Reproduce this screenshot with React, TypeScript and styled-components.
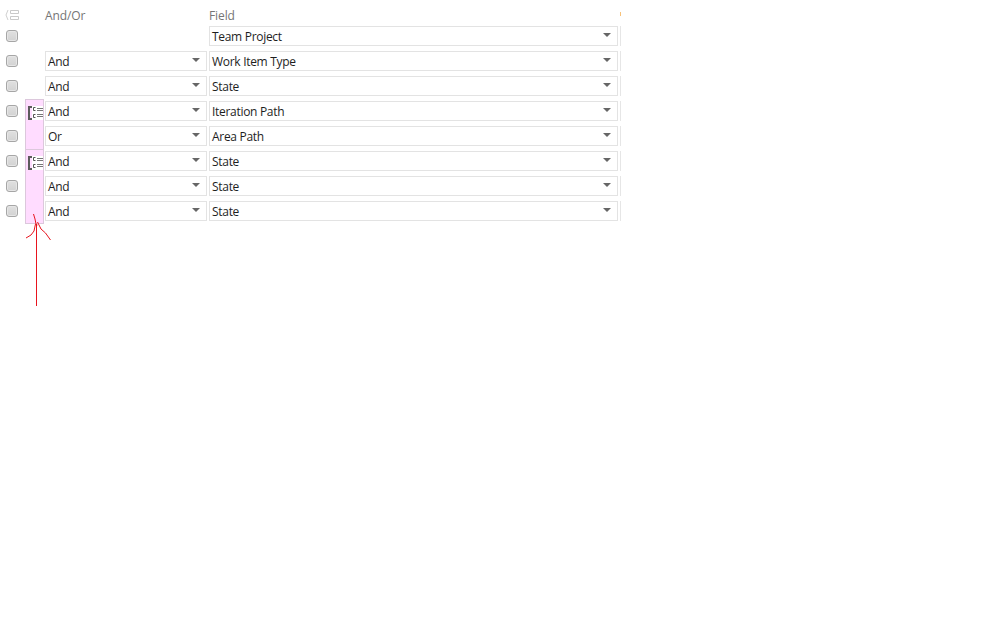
import React from 'react';
import styled, { createGlobalStyle } from 'styled-components';

const GlobalStyle = createGlobalStyle`
  html, body {
    margin: 0;
    background: #fff;
  }
  body {
    font-family: "Open Sans", "Noto Sans", "Liberation Sans", sans-serif;
    font-size: 12px;
  }
`;

const Page = styled.div`
  position: relative;
  width: 1008px;
  height: 630px;
  overflow: hidden;
`;

const QueryGrid = styled.div`
  display: grid;
  grid-template-columns: 25px 20px 164px 411px 2px;
  grid-template-rows: 24px repeat(8, 25px);
`;

const HeaderIconCell = styled.div`
  display: flex;
  padding: 9px 0 0 5px;
  opacity: 0.45;
`;

const HeaderLabel = styled.div<{ $col: number }>`
  grid-column: ${(p) => p.$col};
  grid-row: 1;
  padding-top: 8px;
  font-size: 12px;
  line-height: 16px;
  letter-spacing: -0.1px;
  color: #757575;
`;

const OrangeMark = styled.div`
  grid-column: 5;
  grid-row: 1;
  width: 1px;
  height: 4px;
  margin-top: 12px;
  background: #f8c27a;
`;

const CheckCell = styled.div<{ $row: number }>`
  grid-column: 1;
  grid-row: ${(p) => p.$row};
  padding: 6px 0 0 6px;
`;

const RowCheck = styled.input.attrs({ type: 'checkbox' })`
  appearance: none;
  display: block;
  box-sizing: border-box;
  width: 12px;
  height: 12px;
  margin: 0;
  border: 1px solid #a6a6a6;
  border-radius: 3px;
  background: linear-gradient(#e0e0e0, #d2d2d2);
  box-shadow: inset 0 0 0 1px #e6e6e6;
`;

const GroupBlock = styled.div<{ $start: number; $span: number; $last?: boolean }>`
  grid-column: 2;
  grid-row: ${(p) => p.$start} / span ${(p) => p.$span};
  box-sizing: border-box;
  width: 19px;
  padding: 6px 0 0 2px;
  background: #ffdcff;
  border: 1px solid #dcc8dc;
  border-bottom-width: ${(p) => (p.$last ? '1px' : '0')};
`;

const GroupIcon = styled.svg`
  display: block;
  background: linear-gradient(90deg, transparent 4px, #fff 4px);
`;

const SelectBox = styled.div<{ $col: number; $row: number }>`
  grid-column: ${(p) => p.$col};
  grid-row: ${(p) => p.$row};
  position: relative;
  box-sizing: border-box;
  width: ${(p) => (p.$col === 3 ? '162px' : '409px')};
  height: 20px;
  margin-top: 2px;
  padding-left: 2px;
  border: 1px solid #e3e3e3;
  font-size: 12px;
  line-height: 19px;
  letter-spacing: -0.3px;
  color: #1e1e1e;

  &::after {
    content: '';
    position: absolute;
    top: 6px;
    right: 6px;
    border-left: 4px solid transparent;
    border-right: 4px solid transparent;
    border-top: 4px solid #666;
  }
`;

const NextColumnEdge = styled.div<{ $row: number }>`
  grid-column: 5;
  grid-row: ${(p) => p.$row};
  width: 1px;
  height: 20px;
  margin-top: 2px;
  background: #e6e6e6;
`;

const Annotation = styled.svg`
  position: absolute;
  left: 20px;
  top: 210px;
`;

const rows = [
  { op: '', field: 'Team Project' },
  { op: 'And', field: 'Work Item Type' },
  { op: 'And', field: 'State' },
  { op: 'And', field: 'Iteration Path' },
  { op: 'Or', field: 'Area Path' },
  { op: 'And', field: 'State' },
  { op: 'And', field: 'State' },
  { op: 'And', field: 'State' },
];

const GroupGlyph = () => (
  <GroupIcon width="15" height="14" viewBox="0 0 15 14">
    <path d="M4 1H1v12h3" fill="none" stroke="#5c5c5c" strokeWidth="2" />
    <path d="M7.500 1.500h-2v3h2M7.500 8.500h-2v3h2" fill="none" stroke="#555" />
    <path d="M9 2.500h6M9 4.500h6M9 8.500h6M9 10.500h6" stroke="#777" />
  </GroupIcon>
);

const App: React.FC = () => {
  return (
    <Page>
      <GlobalStyle />
      <QueryGrid>
        <HeaderIconCell>
          <svg width="16" height="12" viewBox="0 0 16 12">
            <path d="M3 1 1 6l2 5" fill="none" stroke="#999" />
            <path d="M5.500 1.500h8v3h-8zM5.500 7.500h8v3h-8z" fill="none" stroke="#888" />
          </svg>
        </HeaderIconCell>
        <HeaderLabel $col={3}>And/Or</HeaderLabel>
        <HeaderLabel $col={4}>Field</HeaderLabel>
        <OrangeMark />

        <GroupBlock $start={5} $span={2}>
          <GroupGlyph />
        </GroupBlock>
        <GroupBlock $start={7} $span={3} $last>
          <GroupGlyph />
        </GroupBlock>

        {rows.map((row, idx) => (
          <React.Fragment key={idx}>
            <CheckCell $row={idx + 2}>
              <RowCheck readOnly />
            </CheckCell>
            {row.op && (
              <SelectBox $col={3} $row={idx + 2}>
                {row.op}
              </SelectBox>
            )}
            <SelectBox $col={4} $row={idx + 2}>
              {row.field}
            </SelectBox>
            <NextColumnEdge $row={idx + 2} />
          </React.Fragment>
        ))}
      </QueryGrid>
      <Annotation width="36" height="100" viewBox="20 210 36 100">
        <path
          d="M36.500 306V224M33.500 214l1.500 5 1 5 1.500 1M35.500 224l-1.500 7-3 4-5 3M37.500 222l3.500 7 4.500 4 5 7"
          fill="none"
          stroke="#e8141e"
          strokeWidth="1"
        />
      </Annotation>
    </Page>
  );
};

export default App;
